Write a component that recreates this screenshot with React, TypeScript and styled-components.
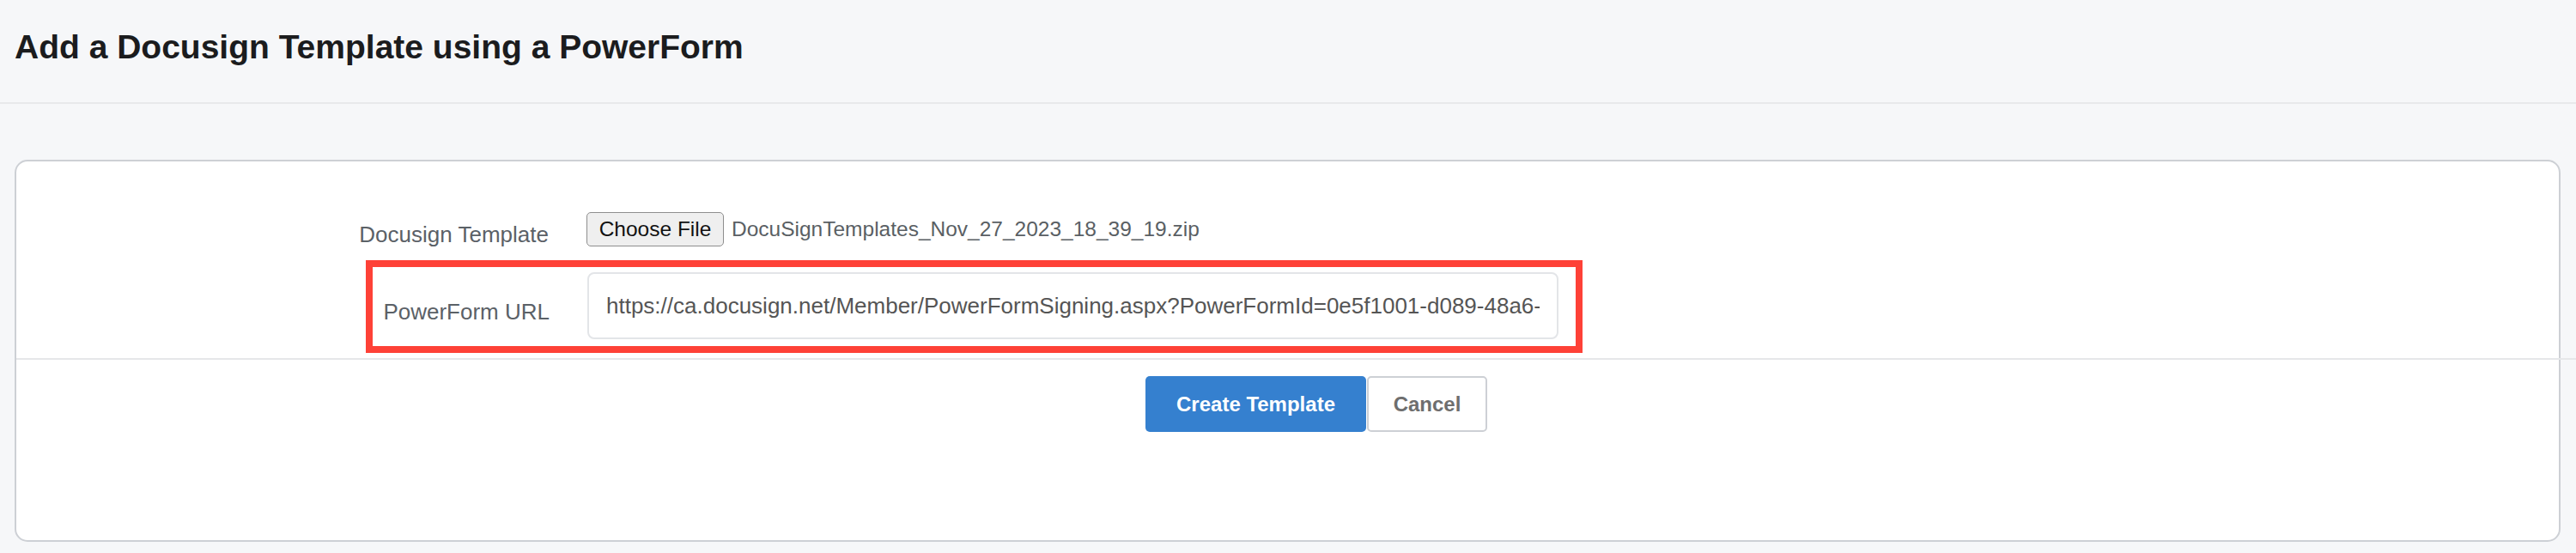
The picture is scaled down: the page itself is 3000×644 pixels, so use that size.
import React from "react";
import styled, {createGlobalStyle} from "styled-components";

const GlobalStyle = createGlobalStyle`
    html, body {
        margin: 0;
        padding: 0;
        background: #f6f7f9;
        font-family: "Liberation Sans", Arial, Helvetica, sans-serif;
    }
    * {
        box-sizing: border-box;
    }
`

type FieldProps = {
    label: string
    labelWidth: number
    labelShift: number
    children: React.ReactNode
}

const Field = (props: FieldProps) => {
    const {label, labelWidth, labelShift, children} = props
    return (
        <>
            <Label $w={labelWidth} $shift={labelShift}>{label}</Label>
            <Control>{children}</Control>
        </>
    )
}

export default function App() {
    return (
        <>
            <GlobalStyle/>
            <Header>
                <Title>Add a Docusign Template using a PowerForm</Title>
            </Header>
            <Main>
                <Card>
                    <FileRow>
                        <Field label="Docusign Template" labelWidth={620} labelShift={12}>
                            <ChooseButton type="button">Choose File</ChooseButton>
                            <FileName>DocuSignTemplates_Nov_27_2023_18_39_19.zip</FileName>
                        </Field>
                    </FileRow>
                    <Highlight>
                        <Field label="PowerForm URL" labelWidth={206} labelShift={14}>
                            <UrlInput
                                type="text"
                                readOnly
                                value="https://ca.docusign.net/Member/PowerFormSigning.aspx?PowerFormId=0e5f1001-d089-48a6-"
                            />
                        </Field>
                    </Highlight>
                    <Divider/>
                    <Actions>
                        <PrimaryButton type="button">Create Template</PrimaryButton>
                        <DefaultButton type="button">Cancel</DefaultButton>
                    </Actions>
                </Card>
            </Main>
        </>
    )
}

const Header = styled.header`
    height: 121px;
    display: flex;
    align-items: center;
    padding: 0 17px 10px;
    border-bottom: 2px solid #e8e9eb;
`
const Title = styled.h1`
    margin: 0;
    font-size: 39px;
    font-weight: 700;
    color: #1b1c1e;
`
const Main = styled.main`
    padding: 65px 18px 13px 17px;
`
const Card = styled.section`
    background: #fff;
    border: 2px solid #cdd0d5;
    border-radius: 15px;
    padding: 59px 0 126px;
`
const FileRow = styled.div`
    display: flex;
    align-items: center;
    height: 40px;
    margin-bottom: 16px;
`
const Highlight = styled.div`
    display: flex;
    align-items: center;
    margin-left: 407px;
    width: 1417px;
    border: 8px solid #fe4137;
    padding: 6px 20px 8px 0;
`
const Label = styled.label<{ $w: number, $shift: number }>`
    flex: 0 0 ${p => p.$w}px;
    margin-top: ${p => p.$shift}px;
    text-align: right;
    font-size: 26px;
    color: #5b6167;
`
const Control = styled.div`
    flex: 1;
    display: flex;
    align-items: center;
    margin-left: 44px;
`
const ChooseButton = styled.button`
    height: 40px;
    width: 160px;
    padding: 0;
    background: #efefef;
    border: 1px solid #8e8e8e;
    border-radius: 5px;
    font-family: inherit;
    font-size: 24.5px;
    color: #111;
`
const FileName = styled.span`
    margin-left: 9px;
    font-size: 24.5px;
    color: #5a5f64;
`
const UrlInput = styled.input`
    width: 100%;
    height: 78px;
    padding: 0 20px;
    border: 2px solid #e3e5e8;
    border-radius: 8px;
    font-family: inherit;
    font-size: 26px;
    color: #555;
    outline: none;
`
const Divider = styled.hr`
    margin: 6px -20px 19px 0;
    border: none;
    height: 2px;
    background: #e6e7e9;
`
const Actions = styled.div`
    display: flex;
    padding-left: 1315px;
`
const ButtonBase = styled.button`
    height: 65px;
    border-radius: 5px;
    font-family: inherit;
    font-size: 24px;
    font-weight: 700;
    padding: 0;
`
const PrimaryButton = styled(ButtonBase)`
    width: 257px;
    background: #3580cf;
    border: none;
    color: #fff;
`
const DefaultButton = styled(ButtonBase)`
    width: 140px;
    margin-left: 1px;
    background: #fff;
    border: 2px solid #cdd0d5;
    color: #6e6e6e;
`
